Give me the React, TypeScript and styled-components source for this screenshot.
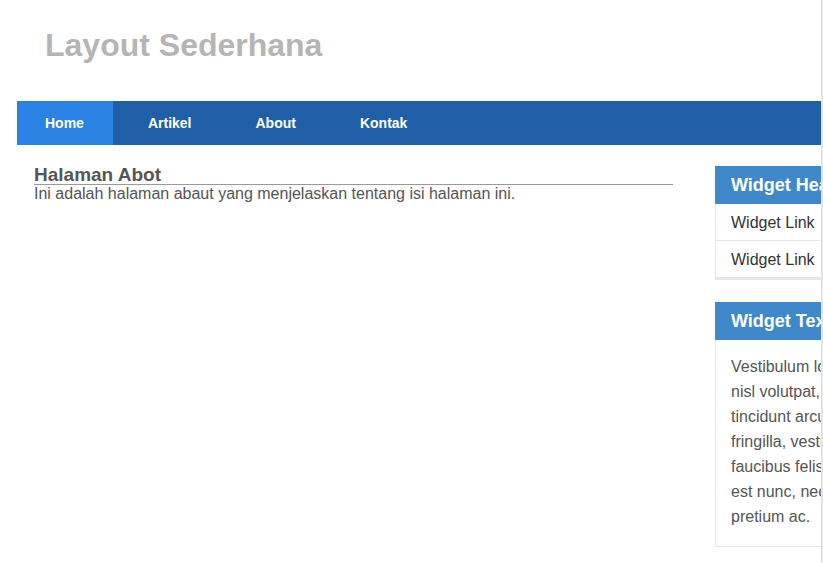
import React from "react";
import styled, { createGlobalStyle } from "styled-components";

const Global = createGlobalStyle`
  html, body { margin: 0; padding: 0; background: #fff; }
  body { font-family: "Liberation Sans", Arial, Helvetica, sans-serif; }
  * { box-sizing: border-box; }
`;

const Frame = styled.div`
  width: 823px;
  height: 563px;
  overflow: hidden;
  border-right: 2px solid #e4e4e4;
`;

const Page = styled.div`
  width: 1010px;
  padding-left: 17px;
`;

const Header = styled.header`
  height: 101px;
  padding: 27px 0 0 28px;
`;

const SiteTitle = styled.h1`
  margin: 0;
  font-size: 32px;
  line-height: 36px;
  font-weight: bold;
  color: #b5b5b5;
`;

const Nav = styled.nav`
  display: flex;
  height: 44px;
  background: #1f5fa8;
  gap: 7px;
`;

const NavLink = styled.a<{ $active?: boolean }>`
  display: flex;
  align-items: center;
  padding: 0 29px 0 28px;
  color: #fff;
  font-weight: bold;
  font-size: 14px;
  text-decoration: none;
  background: ${(p) => (p.$active ? "#2a82e4" : "transparent")};
`;

const Body = styled.div`
  display: flex;
  align-items: flex-start;
  padding-top: 21px;
`;

const Main = styled.main`
  width: 656px;
  padding-left: 17px;
`;

const PageHeading = styled.h2`
  margin: 0;
  font-size: 19px;
  line-height: 18px;
  font-weight: bold;
  color: #555;
  border-bottom: 1px solid #999;
`;

const Para = styled.p`
  margin: 0;
  font-size: 16px;
  line-height: 18px;
  color: #555;
`;

const Sidebar = styled.aside`
  margin-left: 42px;
  width: 264px;
  display: flex;
  flex-direction: column;
  gap: 22px;
`;

const Widget = styled.section`
  border: 1px solid #e6e6e6;
  border-top: none;
  background: #fff;
`;

const WidgetTitle = styled.h3`
  margin: 0 -1px;
  height: 38px;
  display: flex;
  align-items: center;
  padding: 0 16px;
  background: #3f89cb;
  color: #fff;
  font-size: 18px;
  font-weight: bold;
  white-space: nowrap;
`;

const LinkRow = styled.a`
  display: block;
  padding: 11px 15px 9px;
  line-height: 16px;
  font-size: 16px;
  color: #333;
  text-decoration: none;
  border-bottom: 1px solid #e6e6e6;
  &:last-child { border-bottom-width: 2px; }
`;

const WidgetText = styled.p`
  margin: 0;
  padding: 14px 15px 17px;
  font-size: 16px;
  line-height: 25px;
  color: #555;
`;

export default function App() {
  return (
    <Frame>
      <Global />
      <Page>
        <Header>
          <SiteTitle>Layout Sederhana</SiteTitle>
        </Header>
        <Nav>
          <NavLink $active href="#">Home</NavLink>
          <NavLink href="#">Artikel</NavLink>
          <NavLink href="#">About</NavLink>
          <NavLink href="#">Kontak</NavLink>
        </Nav>
        <Body>
          <Main>
            <PageHeading>Halaman Abot</PageHeading>
            <Para>Ini adalah halaman abaut yang menjelaskan tentang isi halaman ini.</Para>
          </Main>
          <Sidebar>
            <Widget>
              <WidgetTitle>Widget Header</WidgetTitle>
              <LinkRow href="#">Widget Link</LinkRow>
              <LinkRow href="#">Widget Link</LinkRow>
            </Widget>
            <Widget>
              <WidgetTitle>Widget Text</WidgetTitle>
              <WidgetText>
                Vestibulum lorem elit, iaculis in nisl volutpat, malesuada tincidunt arcu. Proin in leo
                fringilla, vestibulum mi porta, faucibus felis. Integer pharetra est nunc, nec pretium nunc
                pretium ac.
              </WidgetText>
            </Widget>
          </Sidebar>
        </Body>
      </Page>
    </Frame>
  );
}
